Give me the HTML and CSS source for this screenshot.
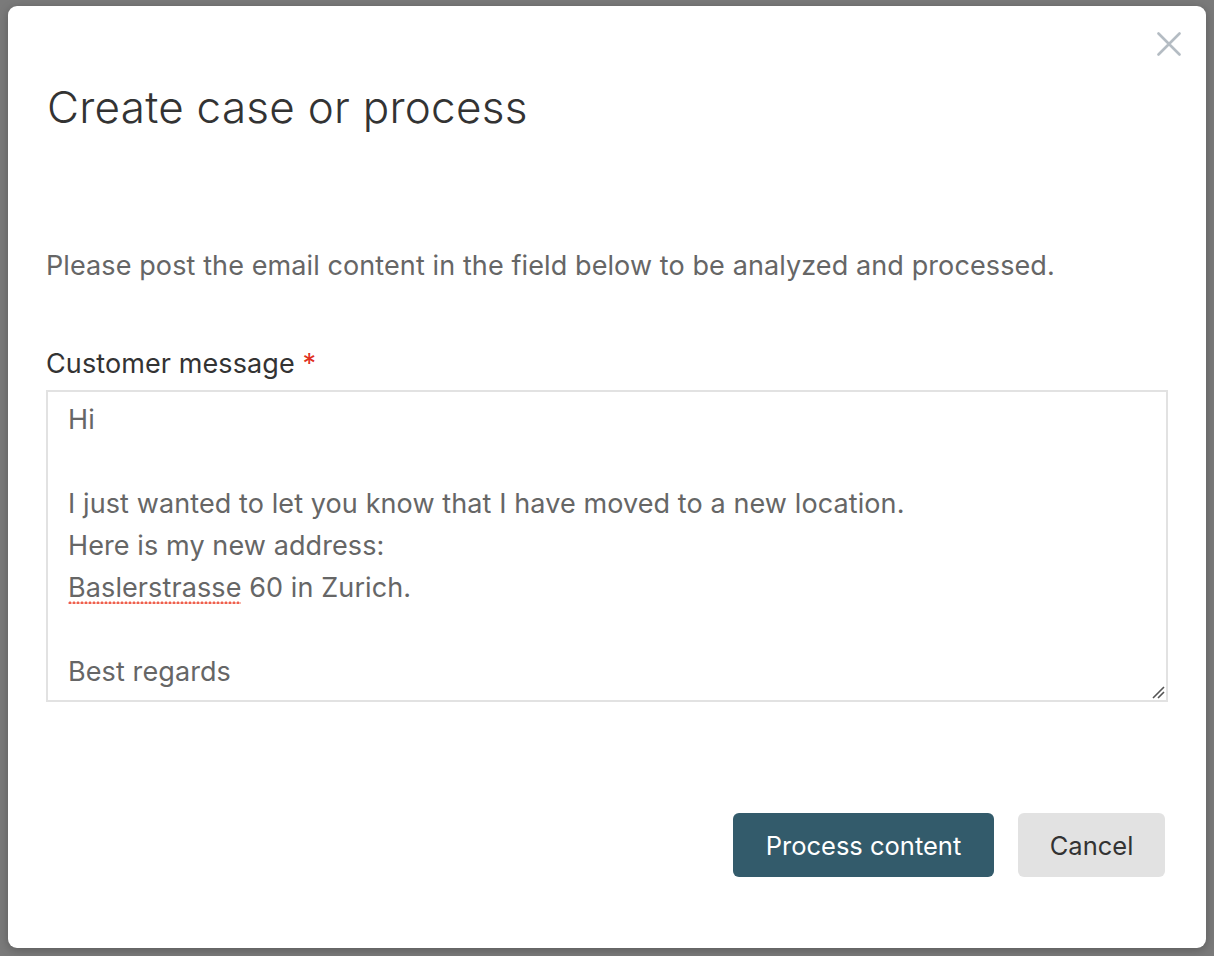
FILE: index.html
```html
<!DOCTYPE html>
<html lang="en">
<head>
<meta charset="utf-8">
<title>Create case or process</title>
<link rel="stylesheet" href="styles.css">
</head>
<body>
<div class="backdrop">
  <div class="modal">
    <button class="close" aria-label="Close">
      <svg width="24" height="24" viewBox="0 0 24 24"><path d="M1.5 1.5 L22.5 22.5 M22.5 1.5 L1.5 22.5" stroke="#b4bcc3" stroke-width="2.6" stroke-linecap="round" fill="none"/></svg>
    </button>
    <h1 class="title">Create case or process</h1>
    <p class="intro">Please post the email content in the field below to be analyzed and processed.</p>
    <label class="label">Customer message <span class="req">*</span></label>
    <div class="textarea" role="textbox" aria-multiline="true">
      <div class="line">Hi</div>
      <div class="line">&nbsp;</div>
      <div class="line">I just wanted to let you know that I have moved to a new location.</div>
      <div class="line">Here is my new address:</div>
      <div class="line"><span class="spell">Baslerstrasse</span> 60 in Zurich.</div>
      <div class="line">&nbsp;</div>
      <div class="line">Best regards</div>
      <svg class="grip" width="14" height="14" viewBox="0 0 14 14"><path d="M13 2 L2 13 M13 7 L7 13" stroke="#555" stroke-width="1.6" fill="none"/></svg>
    </div>
    <div class="actions">
      <button class="btn primary">Process content</button>
      <button class="btn secondary">Cancel</button>
    </div>
  </div>
</div>
</body>
</html>
```
FILE: styles.css
```css
html, body {
  margin: 0;
  padding: 0;
  height: 100%;
}
body {
  background: #7a7a7a;
  font-family: Inter, "Noto Sans", "Liberation Sans", sans-serif;
}
.backdrop {
  padding: 6px 8px 8px 8px;
  height: 100%;
  box-sizing: border-box;
}
.modal {
  position: relative;
  background: #fff;
  border-radius: 9px;
  height: 942px;
  box-sizing: border-box;
  padding: 75px 38px 71px 38px;
  display: flex;
  flex-direction: column;
  box-shadow: 0 2px 10px rgba(0,0,0,0.25);
}
.close {
  position: absolute;
  top: 26px;
  right: 25px;
  background: none;
  border: 0;
  padding: 0;
  width: 24px;
  height: 24px;
  cursor: pointer;
}
.close svg {
  display: block;
}
.title {
  margin: 0 0 0 1px;
  font-size: 44px;
  font-weight: 300;
  line-height: 53px;
  color: #333;
  letter-spacing: 0.25px;
}
.intro {
  margin: 114px 0 0 0;
  font-size: 27px;
  line-height: 36px;
  color: #666;
  letter-spacing: 0.1px;
}
.label {
  display: block;
  margin: 62px 0 8px 0;
  font-size: 27px;
  line-height: 36px;
  color: #333;
  letter-spacing: 0.1px;
}
.req {
  color: #e0301e;
}
.textarea {
  position: relative;
  border: 2px solid #e2e2e2;
  height: 312px;
  box-sizing: border-box;
  padding: 7px 20px;
  font-size: 27px;
  line-height: 42px;
  color: #666;
  letter-spacing: 0.1px;
}
.spell {
  background-image: radial-gradient(circle, #ef5f4c 1.3px, transparent 1.8px);
  background-size: 4px 4px;
  background-repeat: repeat-x;
  background-position: 0 calc(100% + 1px);
}
.grip {
  position: absolute;
  right: 1px;
  bottom: 1px;
}
.actions {
  margin-top: auto;
  display: flex;
  justify-content: flex-end;
  gap: 24px;
  padding-right: 3px;
}
.btn {
  height: 64px;
  border: 0;
  border-radius: 6px;
  font-family: inherit;
  font-size: 25.5px;
  padding: 0;
  cursor: pointer;
}
.primary {
  background: #335b6b;
  color: #fff;
  width: 261px;
}
.secondary {
  background: #e2e2e2;
  color: #333;
  width: 147px;
}
```
